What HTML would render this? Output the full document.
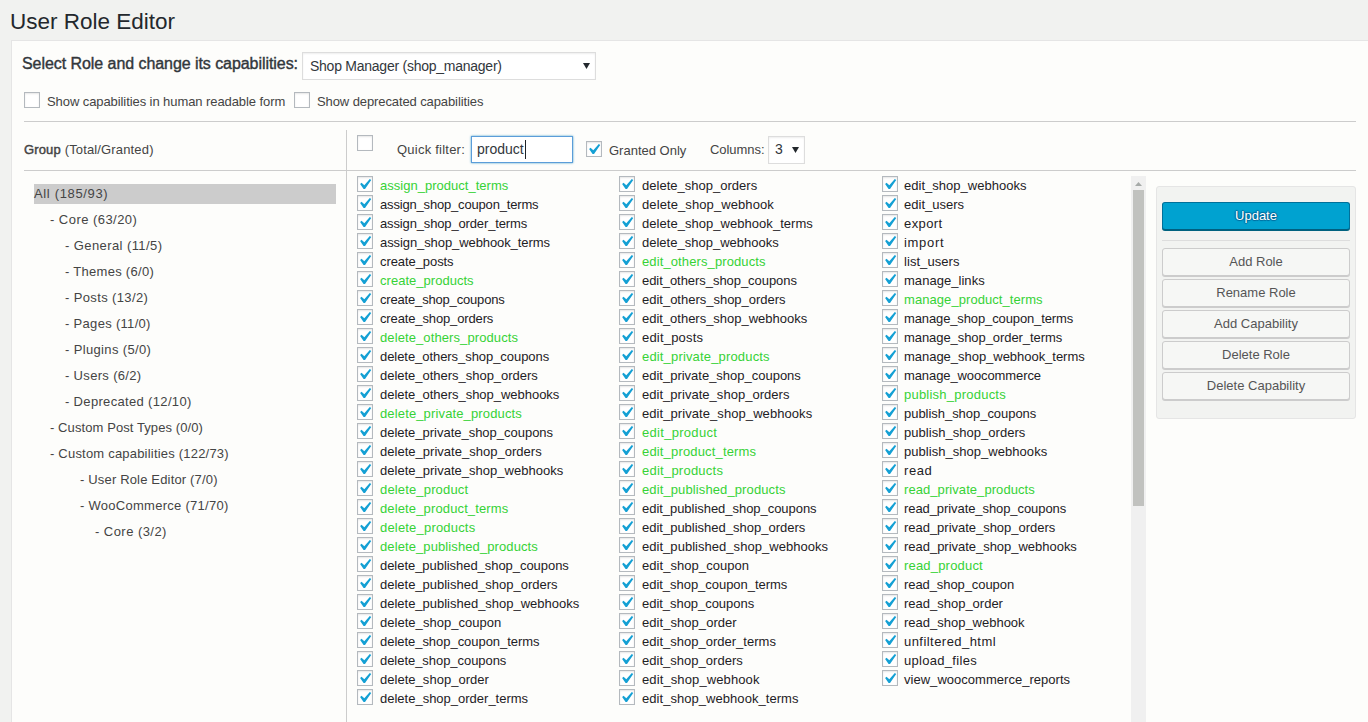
<!DOCTYPE html>
<html><head><meta charset="utf-8"><title>User Role Editor</title>
<style>
html,body{margin:0;padding:0}
body{width:1368px;height:722px;overflow:hidden;background:#f1f2f0;position:relative;font-family:"Liberation Sans", sans-serif}
.t{position:absolute;white-space:nowrap}
.cb{position:absolute;width:16px;height:16px;box-sizing:border-box;border:1px solid #b4b9be;background:#fff;box-shadow:inset 0 1px 2px rgba(0,0,0,.1)}
.cb svg{position:absolute;left:-1px;top:-1px}
.hl{position:absolute;height:1px;background:#cccccc}
.vl{position:absolute;width:1px;background:#cccccc}
.sel{position:absolute;box-sizing:border-box;border:1px solid #dddddd;background:#fff;box-shadow:inset 0 1px 2px rgba(0,0,0,.07)}
.inp{position:absolute;box-sizing:border-box;border:1px solid #5b9dd9;background:#fff;box-shadow:0 0 2px rgba(30,140,190,.8)}
.btnp{position:absolute;box-sizing:border-box;background:#00a2d0;border:1px solid #00709a;border-bottom-color:#005f80;box-shadow:0 1px 0 #00627f;border-radius:3px;color:#fff;font-size:13px;text-align:center;line-height:26px;text-shadow:0 -1px 1px #006799,1px 0 1px #006799,0 1px 1px #006799,-1px 0 1px #006799}
.btn{position:absolute;box-sizing:border-box;background:#f6f7f5;border:1px solid #cccccc;box-shadow:0 1px 0 #cccccc;border-radius:3px;color:#555;font-size:13px;text-align:center;line-height:26px}
</style></head>
<body>
<div class="t" style="left:10px;top:8.5px;font-size:22.5px;line-height:25px;color:#23282d;">User Role Editor</div>
<div style="position:absolute;left:11px;top:40px;width:1400px;height:800px;background:#fdfdfb;border:1px solid #e5e5e5;box-sizing:border-box"></div>
<div class="t" style="left:22px;top:54.599999999999994px;font-size:16px;line-height:17px;color:#32373c;letter-spacing:-0.06px;-webkit-text-stroke:0.4px #32373c;">Select Role and change its capabilities:</div>
<div class="sel" style="left:302px;top:52px;width:294px;height:28px"></div>
<div class="t" style="left:310px;top:58px;font-size:14px;line-height:16px;color:#32373c;letter-spacing:-0.25px;">Shop Manager (shop_manager)</div>
<svg style="position:absolute;left:583px;top:63px" width="7" height="6"><path d="M0 0 L7 0 L3.5 6 Z" fill="#23282d"/></svg>
<div class="cb" style="left:24px;top:92px"></div>
<div class="t" style="left:47px;top:93.5px;font-size:13px;line-height:15px;color:#444;letter-spacing:-0.08px;">Show capabilities in human readable form</div>
<div class="cb" style="left:294px;top:92px"></div>
<div class="t" style="left:317px;top:93.5px;font-size:13px;line-height:15px;color:#444;letter-spacing:-0.1px;">Show deprecated capabilities</div>
<div class="hl" style="left:24px;top:121px;width:1332px"></div>
<div class="hl" style="left:24px;top:170px;width:1332px"></div>
<div class="vl" style="left:346px;top:130px;height:600px"></div>
<div class="t" style="left:24px;top:142px;font-size:13px;line-height:15px;color:#444;letter-spacing:0.15px;"><span style="-webkit-text-stroke:0.45px #444">Group</span> (Total/Granted)</div>
<div class="cb" style="left:357px;top:135px"></div>
<div class="t" style="left:397px;top:142px;font-size:13px;line-height:15px;color:#444;letter-spacing:0.23px;">Quick filter:</div>
<div class="inp" style="left:471px;top:136px;width:102px;height:27px"></div>
<div class="t" style="left:477px;top:141px;font-size:14px;line-height:16px;color:#32373c;">product</div>
<div style="position:absolute;left:525px;top:140px;width:1px;height:19px;background:#1d2125"></div>
<div class="cb" style="left:586px;top:141px"><svg width="16" height="16" viewBox="0 0 16 16"><path transform="translate(-3.07,-2.25) scale(1.07)" d="M14.83 4.89l1.34.94-5.81 8.38H9.02L5.78 9.67l1.34-1.25 2.57 2.4z" fill="#14a0d4"/></svg></div>
<div class="t" style="left:609px;top:142.5px;font-size:13px;line-height:15px;color:#444;letter-spacing:0.0px;">Granted Only</div>
<div class="t" style="left:710px;top:141.5px;font-size:13px;line-height:15px;color:#444;letter-spacing:-0.05px;">Columns:</div>
<div class="sel" style="left:768px;top:136px;width:37px;height:28px"></div>
<div class="t" style="left:775px;top:141px;font-size:14px;line-height:16px;color:#32373c;">3</div>
<svg style="position:absolute;left:792px;top:147px" width="7" height="6"><path d="M0 0 L7 0 L3.5 6 Z" fill="#23282d"/></svg>
<div style="position:absolute;left:34px;top:184px;width:302px;height:20px;background:#cccccc"></div>
<div class="t" style="left:34px;top:186px;font-size:13px;line-height:15px;color:#444;letter-spacing:0.656px;">All (185/93)</div>
<div class="t" style="left:50px;top:212px;font-size:13px;line-height:15px;color:#444;letter-spacing:0.457px;">- Core (63/20)</div>
<div class="t" style="left:65px;top:238px;font-size:13px;line-height:15px;color:#444;letter-spacing:0.413px;">- General (11/5)</div>
<div class="t" style="left:65px;top:264px;font-size:13px;line-height:15px;color:#444;letter-spacing:0.288px;">- Themes (6/0)</div>
<div class="t" style="left:65px;top:290px;font-size:13px;line-height:15px;color:#444;letter-spacing:0.372px;">- Posts (13/2)</div>
<div class="t" style="left:65px;top:316px;font-size:13px;line-height:15px;color:#444;letter-spacing:0.311px;">- Pages (11/0)</div>
<div class="t" style="left:65px;top:342px;font-size:13px;line-height:15px;color:#444;letter-spacing:0.351px;">- Plugins (5/0)</div>
<div class="t" style="left:65px;top:368px;font-size:13px;line-height:15px;color:#444;letter-spacing:0.33px;">- Users (6/2)</div>
<div class="t" style="left:65px;top:394px;font-size:13px;line-height:15px;color:#444;letter-spacing:0.333px;">- Deprecated (12/10)</div>
<div class="t" style="left:50px;top:420px;font-size:13px;line-height:15px;color:#444;letter-spacing:0.088px;">- Custom Post Types (0/0)</div>
<div class="t" style="left:50px;top:446px;font-size:13px;line-height:15px;color:#444;letter-spacing:0.204px;">- Custom capabilities (122/73)</div>
<div class="t" style="left:80px;top:472px;font-size:13px;line-height:15px;color:#444;letter-spacing:0.167px;">- User Role Editor (7/0)</div>
<div class="t" style="left:80px;top:498px;font-size:13px;line-height:15px;color:#444;letter-spacing:0.275px;">- WooCommerce (71/70)</div>
<div class="t" style="left:95px;top:524px;font-size:13px;line-height:15px;color:#444;letter-spacing:0.453px;">- Core (3/2)</div>
<div class="cb" style="left:357px;top:176px"><svg width="16" height="16" viewBox="0 0 16 16"><path transform="translate(-3.07,-2.25) scale(1.07)" d="M14.83 4.89l1.34.94-5.81 8.38H9.02L5.78 9.67l1.34-1.25 2.57 2.4z" fill="#14a0d4"/></svg></div>
<div class="t" style="left:380px;top:178px;font-size:13px;line-height:15px;color:#36d236;letter-spacing:0.018px;">assign_product_terms</div>
<div class="cb" style="left:357px;top:195px"><svg width="16" height="16" viewBox="0 0 16 16"><path transform="translate(-3.07,-2.25) scale(1.07)" d="M14.83 4.89l1.34.94-5.81 8.38H9.02L5.78 9.67l1.34-1.25 2.57 2.4z" fill="#14a0d4"/></svg></div>
<div class="t" style="left:380px;top:197px;font-size:13px;line-height:15px;color:#1d2125;letter-spacing:-0.176px;">assign_shop_coupon_terms</div>
<div class="cb" style="left:357px;top:214px"><svg width="16" height="16" viewBox="0 0 16 16"><path transform="translate(-3.07,-2.25) scale(1.07)" d="M14.83 4.89l1.34.94-5.81 8.38H9.02L5.78 9.67l1.34-1.25 2.57 2.4z" fill="#14a0d4"/></svg></div>
<div class="t" style="left:380px;top:216px;font-size:13px;line-height:15px;color:#1d2125;letter-spacing:-0.143px;">assign_shop_order_terms</div>
<div class="cb" style="left:357px;top:233px"><svg width="16" height="16" viewBox="0 0 16 16"><path transform="translate(-3.07,-2.25) scale(1.07)" d="M14.83 4.89l1.34.94-5.81 8.38H9.02L5.78 9.67l1.34-1.25 2.57 2.4z" fill="#14a0d4"/></svg></div>
<div class="t" style="left:380px;top:235px;font-size:13px;line-height:15px;color:#1d2125;letter-spacing:-0.087px;">assign_shop_webhook_terms</div>
<div class="cb" style="left:357px;top:252px"><svg width="16" height="16" viewBox="0 0 16 16"><path transform="translate(-3.07,-2.25) scale(1.07)" d="M14.83 4.89l1.34.94-5.81 8.38H9.02L5.78 9.67l1.34-1.25 2.57 2.4z" fill="#14a0d4"/></svg></div>
<div class="t" style="left:380px;top:254px;font-size:13px;line-height:15px;color:#1d2125;letter-spacing:-0.075px;">create_posts</div>
<div class="cb" style="left:357px;top:271px"><svg width="16" height="16" viewBox="0 0 16 16"><path transform="translate(-3.07,-2.25) scale(1.07)" d="M14.83 4.89l1.34.94-5.81 8.38H9.02L5.78 9.67l1.34-1.25 2.57 2.4z" fill="#14a0d4"/></svg></div>
<div class="t" style="left:380px;top:273px;font-size:13px;line-height:15px;color:#36d236;letter-spacing:0.023px;">create_products</div>
<div class="cb" style="left:357px;top:290px"><svg width="16" height="16" viewBox="0 0 16 16"><path transform="translate(-3.07,-2.25) scale(1.07)" d="M14.83 4.89l1.34.94-5.81 8.38H9.02L5.78 9.67l1.34-1.25 2.57 2.4z" fill="#14a0d4"/></svg></div>
<div class="t" style="left:380px;top:292px;font-size:13px;line-height:15px;color:#1d2125;letter-spacing:-0.176px;">create_shop_coupons</div>
<div class="cb" style="left:357px;top:309px"><svg width="16" height="16" viewBox="0 0 16 16"><path transform="translate(-3.07,-2.25) scale(1.07)" d="M14.83 4.89l1.34.94-5.81 8.38H9.02L5.78 9.67l1.34-1.25 2.57 2.4z" fill="#14a0d4"/></svg></div>
<div class="t" style="left:380px;top:311px;font-size:13px;line-height:15px;color:#1d2125;letter-spacing:-0.133px;">create_shop_orders</div>
<div class="cb" style="left:357px;top:328px"><svg width="16" height="16" viewBox="0 0 16 16"><path transform="translate(-3.07,-2.25) scale(1.07)" d="M14.83 4.89l1.34.94-5.81 8.38H9.02L5.78 9.67l1.34-1.25 2.57 2.4z" fill="#14a0d4"/></svg></div>
<div class="t" style="left:380px;top:330px;font-size:13px;line-height:15px;color:#36d236;letter-spacing:0.1px;">delete_others_products</div>
<div class="cb" style="left:357px;top:347px"><svg width="16" height="16" viewBox="0 0 16 16"><path transform="translate(-3.07,-2.25) scale(1.07)" d="M14.83 4.89l1.34.94-5.81 8.38H9.02L5.78 9.67l1.34-1.25 2.57 2.4z" fill="#14a0d4"/></svg></div>
<div class="t" style="left:380px;top:349px;font-size:13px;line-height:15px;color:#1d2125;letter-spacing:-0.056px;">delete_others_shop_coupons</div>
<div class="cb" style="left:357px;top:366px"><svg width="16" height="16" viewBox="0 0 16 16"><path transform="translate(-3.07,-2.25) scale(1.07)" d="M14.83 4.89l1.34.94-5.81 8.38H9.02L5.78 9.67l1.34-1.25 2.57 2.4z" fill="#14a0d4"/></svg></div>
<div class="t" style="left:380px;top:368px;font-size:13px;line-height:15px;color:#1d2125;letter-spacing:-0.019px;">delete_others_shop_orders</div>
<div class="cb" style="left:357px;top:385px"><svg width="16" height="16" viewBox="0 0 16 16"><path transform="translate(-3.07,-2.25) scale(1.07)" d="M14.83 4.89l1.34.94-5.81 8.38H9.02L5.78 9.67l1.34-1.25 2.57 2.4z" fill="#14a0d4"/></svg></div>
<div class="t" style="left:380px;top:387px;font-size:13px;line-height:15px;color:#1d2125;letter-spacing:-0.024px;">delete_others_shop_webhooks</div>
<div class="cb" style="left:357px;top:404px"><svg width="16" height="16" viewBox="0 0 16 16"><path transform="translate(-3.07,-2.25) scale(1.07)" d="M14.83 4.89l1.34.94-5.81 8.38H9.02L5.78 9.67l1.34-1.25 2.57 2.4z" fill="#14a0d4"/></svg></div>
<div class="t" style="left:380px;top:406px;font-size:13px;line-height:15px;color:#36d236;letter-spacing:0.139px;">delete_private_products</div>
<div class="cb" style="left:357px;top:423px"><svg width="16" height="16" viewBox="0 0 16 16"><path transform="translate(-3.07,-2.25) scale(1.07)" d="M14.83 4.89l1.34.94-5.81 8.38H9.02L5.78 9.67l1.34-1.25 2.57 2.4z" fill="#14a0d4"/></svg></div>
<div class="t" style="left:380px;top:425px;font-size:13px;line-height:15px;color:#1d2125;letter-spacing:-0.016px;">delete_private_shop_coupons</div>
<div class="cb" style="left:357px;top:442px"><svg width="16" height="16" viewBox="0 0 16 16"><path transform="translate(-3.07,-2.25) scale(1.07)" d="M14.83 4.89l1.34.94-5.81 8.38H9.02L5.78 9.67l1.34-1.25 2.57 2.4z" fill="#14a0d4"/></svg></div>
<div class="t" style="left:380px;top:444px;font-size:13px;line-height:15px;color:#1d2125;letter-spacing:0.02px;">delete_private_shop_orders</div>
<div class="cb" style="left:357px;top:461px"><svg width="16" height="16" viewBox="0 0 16 16"><path transform="translate(-3.07,-2.25) scale(1.07)" d="M14.83 4.89l1.34.94-5.81 8.38H9.02L5.78 9.67l1.34-1.25 2.57 2.4z" fill="#14a0d4"/></svg></div>
<div class="t" style="left:380px;top:463px;font-size:13px;line-height:15px;color:#1d2125;letter-spacing:0.013px;">delete_private_shop_webhooks</div>
<div class="cb" style="left:357px;top:480px"><svg width="16" height="16" viewBox="0 0 16 16"><path transform="translate(-3.07,-2.25) scale(1.07)" d="M14.83 4.89l1.34.94-5.81 8.38H9.02L5.78 9.67l1.34-1.25 2.57 2.4z" fill="#14a0d4"/></svg></div>
<div class="t" style="left:380px;top:482px;font-size:13px;line-height:15px;color:#36d236;letter-spacing:0.156px;">delete_product</div>
<div class="cb" style="left:357px;top:499px"><svg width="16" height="16" viewBox="0 0 16 16"><path transform="translate(-3.07,-2.25) scale(1.07)" d="M14.83 4.89l1.34.94-5.81 8.38H9.02L5.78 9.67l1.34-1.25 2.57 2.4z" fill="#14a0d4"/></svg></div>
<div class="t" style="left:380px;top:501px;font-size:13px;line-height:15px;color:#36d236;letter-spacing:0.133px;">delete_product_terms</div>
<div class="cb" style="left:357px;top:518px"><svg width="16" height="16" viewBox="0 0 16 16"><path transform="translate(-3.07,-2.25) scale(1.07)" d="M14.83 4.89l1.34.94-5.81 8.38H9.02L5.78 9.67l1.34-1.25 2.57 2.4z" fill="#14a0d4"/></svg></div>
<div class="t" style="left:380px;top:520px;font-size:13px;line-height:15px;color:#36d236;letter-spacing:0.187px;">delete_products</div>
<div class="cb" style="left:357px;top:537px"><svg width="16" height="16" viewBox="0 0 16 16"><path transform="translate(-3.07,-2.25) scale(1.07)" d="M14.83 4.89l1.34.94-5.81 8.38H9.02L5.78 9.67l1.34-1.25 2.57 2.4z" fill="#14a0d4"/></svg></div>
<div class="t" style="left:380px;top:539px;font-size:13px;line-height:15px;color:#36d236;letter-spacing:0.101px;">delete_published_products</div>
<div class="cb" style="left:357px;top:556px"><svg width="16" height="16" viewBox="0 0 16 16"><path transform="translate(-3.07,-2.25) scale(1.07)" d="M14.83 4.89l1.34.94-5.81 8.38H9.02L5.78 9.67l1.34-1.25 2.57 2.4z" fill="#14a0d4"/></svg></div>
<div class="t" style="left:380px;top:558px;font-size:13px;line-height:15px;color:#1d2125;letter-spacing:-0.045px;">delete_published_shop_coupons</div>
<div class="cb" style="left:357px;top:575px"><svg width="16" height="16" viewBox="0 0 16 16"><path transform="translate(-3.07,-2.25) scale(1.07)" d="M14.83 4.89l1.34.94-5.81 8.38H9.02L5.78 9.67l1.34-1.25 2.57 2.4z" fill="#14a0d4"/></svg></div>
<div class="t" style="left:380px;top:577px;font-size:13px;line-height:15px;color:#1d2125;letter-spacing:-0.013px;">delete_published_shop_orders</div>
<div class="cb" style="left:357px;top:594px"><svg width="16" height="16" viewBox="0 0 16 16"><path transform="translate(-3.07,-2.25) scale(1.07)" d="M14.83 4.89l1.34.94-5.81 8.38H9.02L5.78 9.67l1.34-1.25 2.57 2.4z" fill="#14a0d4"/></svg></div>
<div class="t" style="left:380px;top:596px;font-size:13px;line-height:15px;color:#1d2125;letter-spacing:-0.01px;">delete_published_shop_webhooks</div>
<div class="cb" style="left:357px;top:613px"><svg width="16" height="16" viewBox="0 0 16 16"><path transform="translate(-3.07,-2.25) scale(1.07)" d="M14.83 4.89l1.34.94-5.81 8.38H9.02L5.78 9.67l1.34-1.25 2.57 2.4z" fill="#14a0d4"/></svg></div>
<div class="t" style="left:380px;top:615px;font-size:13px;line-height:15px;color:#1d2125;letter-spacing:0.033px;">delete_shop_coupon</div>
<div class="cb" style="left:357px;top:632px"><svg width="16" height="16" viewBox="0 0 16 16"><path transform="translate(-3.07,-2.25) scale(1.07)" d="M14.83 4.89l1.34.94-5.81 8.38H9.02L5.78 9.67l1.34-1.25 2.57 2.4z" fill="#14a0d4"/></svg></div>
<div class="t" style="left:380px;top:634px;font-size:13px;line-height:15px;color:#1d2125;letter-spacing:-0.037px;">delete_shop_coupon_terms</div>
<div class="cb" style="left:357px;top:651px"><svg width="16" height="16" viewBox="0 0 16 16"><path transform="translate(-3.07,-2.25) scale(1.07)" d="M14.83 4.89l1.34.94-5.81 8.38H9.02L5.78 9.67l1.34-1.25 2.57 2.4z" fill="#14a0d4"/></svg></div>
<div class="t" style="left:380px;top:653px;font-size:13px;line-height:15px;color:#1d2125;letter-spacing:-0.047px;">delete_shop_coupons</div>
<div class="cb" style="left:357px;top:670px"><svg width="16" height="16" viewBox="0 0 16 16"><path transform="translate(-3.07,-2.25) scale(1.07)" d="M14.83 4.89l1.34.94-5.81 8.38H9.02L5.78 9.67l1.34-1.25 2.57 2.4z" fill="#14a0d4"/></svg></div>
<div class="t" style="left:380px;top:672px;font-size:13px;line-height:15px;color:#1d2125;letter-spacing:0.031px;">delete_shop_order</div>
<div class="cb" style="left:357px;top:689px"><svg width="16" height="16" viewBox="0 0 16 16"><path transform="translate(-3.07,-2.25) scale(1.07)" d="M14.83 4.89l1.34.94-5.81 8.38H9.02L5.78 9.67l1.34-1.25 2.57 2.4z" fill="#14a0d4"/></svg></div>
<div class="t" style="left:380px;top:691px;font-size:13px;line-height:15px;color:#1d2125;letter-spacing:-0.002px;">delete_shop_order_terms</div>
<div class="cb" style="left:619px;top:176px"><svg width="16" height="16" viewBox="0 0 16 16"><path transform="translate(-3.07,-2.25) scale(1.07)" d="M14.83 4.89l1.34.94-5.81 8.38H9.02L5.78 9.67l1.34-1.25 2.57 2.4z" fill="#14a0d4"/></svg></div>
<div class="t" style="left:642px;top:178px;font-size:13px;line-height:15px;color:#1d2125;letter-spacing:0.016px;">delete_shop_orders</div>
<div class="cb" style="left:619px;top:195px"><svg width="16" height="16" viewBox="0 0 16 16"><path transform="translate(-3.07,-2.25) scale(1.07)" d="M14.83 4.89l1.34.94-5.81 8.38H9.02L5.78 9.67l1.34-1.25 2.57 2.4z" fill="#14a0d4"/></svg></div>
<div class="t" style="left:642px;top:197px;font-size:13px;line-height:15px;color:#1d2125;letter-spacing:0.097px;">delete_shop_webhook</div>
<div class="cb" style="left:619px;top:214px"><svg width="16" height="16" viewBox="0 0 16 16"><path transform="translate(-3.07,-2.25) scale(1.07)" d="M14.83 4.89l1.34.94-5.81 8.38H9.02L5.78 9.67l1.34-1.25 2.57 2.4z" fill="#14a0d4"/></svg></div>
<div class="t" style="left:642px;top:216px;font-size:13px;line-height:15px;color:#1d2125;letter-spacing:0.041px;">delete_shop_webhook_terms</div>
<div class="cb" style="left:619px;top:233px"><svg width="16" height="16" viewBox="0 0 16 16"><path transform="translate(-3.07,-2.25) scale(1.07)" d="M14.83 4.89l1.34.94-5.81 8.38H9.02L5.78 9.67l1.34-1.25 2.57 2.4z" fill="#14a0d4"/></svg></div>
<div class="t" style="left:642px;top:235px;font-size:13px;line-height:15px;color:#1d2125;letter-spacing:0.005px;">delete_shop_webhooks</div>
<div class="cb" style="left:619px;top:252px"><svg width="16" height="16" viewBox="0 0 16 16"><path transform="translate(-3.07,-2.25) scale(1.07)" d="M14.83 4.89l1.34.94-5.81 8.38H9.02L5.78 9.67l1.34-1.25 2.57 2.4z" fill="#14a0d4"/></svg></div>
<div class="t" style="left:642px;top:254px;font-size:13px;line-height:15px;color:#36d236;letter-spacing:0.111px;">edit_others_products</div>
<div class="cb" style="left:619px;top:271px"><svg width="16" height="16" viewBox="0 0 16 16"><path transform="translate(-3.07,-2.25) scale(1.07)" d="M14.83 4.89l1.34.94-5.81 8.38H9.02L5.78 9.67l1.34-1.25 2.57 2.4z" fill="#14a0d4"/></svg></div>
<div class="t" style="left:642px;top:273px;font-size:13px;line-height:15px;color:#1d2125;letter-spacing:-0.05px;">edit_others_shop_coupons</div>
<div class="cb" style="left:619px;top:290px"><svg width="16" height="16" viewBox="0 0 16 16"><path transform="translate(-3.07,-2.25) scale(1.07)" d="M14.83 4.89l1.34.94-5.81 8.38H9.02L5.78 9.67l1.34-1.25 2.57 2.4z" fill="#14a0d4"/></svg></div>
<div class="t" style="left:642px;top:292px;font-size:13px;line-height:15px;color:#1d2125;letter-spacing:-0.011px;">edit_others_shop_orders</div>
<div class="cb" style="left:619px;top:309px"><svg width="16" height="16" viewBox="0 0 16 16"><path transform="translate(-3.07,-2.25) scale(1.07)" d="M14.83 4.89l1.34.94-5.81 8.38H9.02L5.78 9.67l1.34-1.25 2.57 2.4z" fill="#14a0d4"/></svg></div>
<div class="t" style="left:642px;top:311px;font-size:13px;line-height:15px;color:#1d2125;letter-spacing:-0.016px;">edit_others_shop_webhooks</div>
<div class="cb" style="left:619px;top:328px"><svg width="16" height="16" viewBox="0 0 16 16"><path transform="translate(-3.07,-2.25) scale(1.07)" d="M14.83 4.89l1.34.94-5.81 8.38H9.02L5.78 9.67l1.34-1.25 2.57 2.4z" fill="#14a0d4"/></svg></div>
<div class="t" style="left:642px;top:330px;font-size:13px;line-height:15px;color:#1d2125;letter-spacing:0.192px;">edit_posts</div>
<div class="cb" style="left:619px;top:347px"><svg width="16" height="16" viewBox="0 0 16 16"><path transform="translate(-3.07,-2.25) scale(1.07)" d="M14.83 4.89l1.34.94-5.81 8.38H9.02L5.78 9.67l1.34-1.25 2.57 2.4z" fill="#14a0d4"/></svg></div>
<div class="t" style="left:642px;top:349px;font-size:13px;line-height:15px;color:#36d236;letter-spacing:0.165px;">edit_private_products</div>
<div class="cb" style="left:619px;top:366px"><svg width="16" height="16" viewBox="0 0 16 16"><path transform="translate(-3.07,-2.25) scale(1.07)" d="M14.83 4.89l1.34.94-5.81 8.38H9.02L5.78 9.67l1.34-1.25 2.57 2.4z" fill="#14a0d4"/></svg></div>
<div class="t" style="left:642px;top:368px;font-size:13px;line-height:15px;color:#1d2125;letter-spacing:-0.007px;">edit_private_shop_coupons</div>
<div class="cb" style="left:619px;top:385px"><svg width="16" height="16" viewBox="0 0 16 16"><path transform="translate(-3.07,-2.25) scale(1.07)" d="M14.83 4.89l1.34.94-5.81 8.38H9.02L5.78 9.67l1.34-1.25 2.57 2.4z" fill="#14a0d4"/></svg></div>
<div class="t" style="left:642px;top:387px;font-size:13px;line-height:15px;color:#1d2125;letter-spacing:0.032px;">edit_private_shop_orders</div>
<div class="cb" style="left:619px;top:404px"><svg width="16" height="16" viewBox="0 0 16 16"><path transform="translate(-3.07,-2.25) scale(1.07)" d="M14.83 4.89l1.34.94-5.81 8.38H9.02L5.78 9.67l1.34-1.25 2.57 2.4z" fill="#14a0d4"/></svg></div>
<div class="t" style="left:642px;top:406px;font-size:13px;line-height:15px;color:#1d2125;letter-spacing:0.072px;">edit_private_shop_webhooks</div>
<div class="cb" style="left:619px;top:423px"><svg width="16" height="16" viewBox="0 0 16 16"><path transform="translate(-3.07,-2.25) scale(1.07)" d="M14.83 4.89l1.34.94-5.81 8.38H9.02L5.78 9.67l1.34-1.25 2.57 2.4z" fill="#14a0d4"/></svg></div>
<div class="t" style="left:642px;top:425px;font-size:13px;line-height:15px;color:#36d236;letter-spacing:0.298px;">edit_product</div>
<div class="cb" style="left:619px;top:442px"><svg width="16" height="16" viewBox="0 0 16 16"><path transform="translate(-3.07,-2.25) scale(1.07)" d="M14.83 4.89l1.34.94-5.81 8.38H9.02L5.78 9.67l1.34-1.25 2.57 2.4z" fill="#14a0d4"/></svg></div>
<div class="t" style="left:642px;top:444px;font-size:13px;line-height:15px;color:#36d236;letter-spacing:0.162px;">edit_product_terms</div>
<div class="cb" style="left:619px;top:461px"><svg width="16" height="16" viewBox="0 0 16 16"><path transform="translate(-3.07,-2.25) scale(1.07)" d="M14.83 4.89l1.34.94-5.81 8.38H9.02L5.78 9.67l1.34-1.25 2.57 2.4z" fill="#14a0d4"/></svg></div>
<div class="t" style="left:642px;top:463px;font-size:13px;line-height:15px;color:#36d236;letter-spacing:0.238px;">edit_products</div>
<div class="cb" style="left:619px;top:480px"><svg width="16" height="16" viewBox="0 0 16 16"><path transform="translate(-3.07,-2.25) scale(1.07)" d="M14.83 4.89l1.34.94-5.81 8.38H9.02L5.78 9.67l1.34-1.25 2.57 2.4z" fill="#14a0d4"/></svg></div>
<div class="t" style="left:642px;top:482px;font-size:13px;line-height:15px;color:#36d236;letter-spacing:0.112px;">edit_published_products</div>
<div class="cb" style="left:619px;top:499px"><svg width="16" height="16" viewBox="0 0 16 16"><path transform="translate(-3.07,-2.25) scale(1.07)" d="M14.83 4.89l1.34.94-5.81 8.38H9.02L5.78 9.67l1.34-1.25 2.57 2.4z" fill="#14a0d4"/></svg></div>
<div class="t" style="left:642px;top:501px;font-size:13px;line-height:15px;color:#1d2125;letter-spacing:-0.04px;">edit_published_shop_coupons</div>
<div class="cb" style="left:619px;top:518px"><svg width="16" height="16" viewBox="0 0 16 16"><path transform="translate(-3.07,-2.25) scale(1.07)" d="M14.83 4.89l1.34.94-5.81 8.38H9.02L5.78 9.67l1.34-1.25 2.57 2.4z" fill="#14a0d4"/></svg></div>
<div class="t" style="left:642px;top:520px;font-size:13px;line-height:15px;color:#1d2125;letter-spacing:-0.004px;">edit_published_shop_orders</div>
<div class="cb" style="left:619px;top:537px"><svg width="16" height="16" viewBox="0 0 16 16"><path transform="translate(-3.07,-2.25) scale(1.07)" d="M14.83 4.89l1.34.94-5.81 8.38H9.02L5.78 9.67l1.34-1.25 2.57 2.4z" fill="#14a0d4"/></svg></div>
<div class="t" style="left:642px;top:539px;font-size:13px;line-height:15px;color:#1d2125;letter-spacing:0.036px;">edit_published_shop_webhooks</div>
<div class="cb" style="left:619px;top:556px"><svg width="16" height="16" viewBox="0 0 16 16"><path transform="translate(-3.07,-2.25) scale(1.07)" d="M14.83 4.89l1.34.94-5.81 8.38H9.02L5.78 9.67l1.34-1.25 2.57 2.4z" fill="#14a0d4"/></svg></div>
<div class="t" style="left:642px;top:558px;font-size:13px;line-height:15px;color:#1d2125;letter-spacing:0.053px;">edit_shop_coupon</div>
<div class="cb" style="left:619px;top:575px"><svg width="16" height="16" viewBox="0 0 16 16"><path transform="translate(-3.07,-2.25) scale(1.07)" d="M14.83 4.89l1.34.94-5.81 8.38H9.02L5.78 9.67l1.34-1.25 2.57 2.4z" fill="#14a0d4"/></svg></div>
<div class="t" style="left:642px;top:577px;font-size:13px;line-height:15px;color:#1d2125;letter-spacing:-0.034px;">edit_shop_coupon_terms</div>
<div class="cb" style="left:619px;top:594px"><svg width="16" height="16" viewBox="0 0 16 16"><path transform="translate(-3.07,-2.25) scale(1.07)" d="M14.83 4.89l1.34.94-5.81 8.38H9.02L5.78 9.67l1.34-1.25 2.57 2.4z" fill="#14a0d4"/></svg></div>
<div class="t" style="left:642px;top:596px;font-size:13px;line-height:15px;color:#1d2125;letter-spacing:-0.039px;">edit_shop_coupons</div>
<div class="cb" style="left:619px;top:613px"><svg width="16" height="16" viewBox="0 0 16 16"><path transform="translate(-3.07,-2.25) scale(1.07)" d="M14.83 4.89l1.34.94-5.81 8.38H9.02L5.78 9.67l1.34-1.25 2.57 2.4z" fill="#14a0d4"/></svg></div>
<div class="t" style="left:642px;top:615px;font-size:13px;line-height:15px;color:#1d2125;letter-spacing:0.052px;">edit_shop_order</div>
<div class="cb" style="left:619px;top:632px"><svg width="16" height="16" viewBox="0 0 16 16"><path transform="translate(-3.07,-2.25) scale(1.07)" d="M14.83 4.89l1.34.94-5.81 8.38H9.02L5.78 9.67l1.34-1.25 2.57 2.4z" fill="#14a0d4"/></svg></div>
<div class="t" style="left:642px;top:634px;font-size:13px;line-height:15px;color:#1d2125;letter-spacing:0.01px;">edit_shop_order_terms</div>
<div class="cb" style="left:619px;top:651px"><svg width="16" height="16" viewBox="0 0 16 16"><path transform="translate(-3.07,-2.25) scale(1.07)" d="M14.83 4.89l1.34.94-5.81 8.38H9.02L5.78 9.67l1.34-1.25 2.57 2.4z" fill="#14a0d4"/></svg></div>
<div class="t" style="left:642px;top:653px;font-size:13px;line-height:15px;color:#1d2125;letter-spacing:0.02px;">edit_shop_orders</div>
<div class="cb" style="left:619px;top:670px"><svg width="16" height="16" viewBox="0 0 16 16"><path transform="translate(-3.07,-2.25) scale(1.07)" d="M14.83 4.89l1.34.94-5.81 8.38H9.02L5.78 9.67l1.34-1.25 2.57 2.4z" fill="#14a0d4"/></svg></div>
<div class="t" style="left:642px;top:672px;font-size:13px;line-height:15px;color:#1d2125;letter-spacing:0.111px;">edit_shop_webhook</div>
<div class="cb" style="left:619px;top:689px"><svg width="16" height="16" viewBox="0 0 16 16"><path transform="translate(-3.07,-2.25) scale(1.07)" d="M14.83 4.89l1.34.94-5.81 8.38H9.02L5.78 9.67l1.34-1.25 2.57 2.4z" fill="#14a0d4"/></svg></div>
<div class="t" style="left:642px;top:691px;font-size:13px;line-height:15px;color:#1d2125;letter-spacing:0.048px;">edit_shop_webhook_terms</div>
<div class="cb" style="left:882px;top:176px"><svg width="16" height="16" viewBox="0 0 16 16"><path transform="translate(-3.07,-2.25) scale(1.07)" d="M14.83 4.89l1.34.94-5.81 8.38H9.02L5.78 9.67l1.34-1.25 2.57 2.4z" fill="#14a0d4"/></svg></div>
<div class="t" style="left:904px;top:178px;font-size:13px;line-height:15px;color:#1d2125;letter-spacing:0.021px;">edit_shop_webhooks</div>
<div class="cb" style="left:882px;top:195px"><svg width="16" height="16" viewBox="0 0 16 16"><path transform="translate(-3.07,-2.25) scale(1.07)" d="M14.83 4.89l1.34.94-5.81 8.38H9.02L5.78 9.67l1.34-1.25 2.57 2.4z" fill="#14a0d4"/></svg></div>
<div class="t" style="left:904px;top:197px;font-size:13px;line-height:15px;color:#1d2125;letter-spacing:0.013px;">edit_users</div>
<div class="cb" style="left:882px;top:214px"><svg width="16" height="16" viewBox="0 0 16 16"><path transform="translate(-3.07,-2.25) scale(1.07)" d="M14.83 4.89l1.34.94-5.81 8.38H9.02L5.78 9.67l1.34-1.25 2.57 2.4z" fill="#14a0d4"/></svg></div>
<div class="t" style="left:904px;top:216px;font-size:13px;line-height:15px;color:#1d2125;letter-spacing:0.4px;">export</div>
<div class="cb" style="left:882px;top:233px"><svg width="16" height="16" viewBox="0 0 16 16"><path transform="translate(-3.07,-2.25) scale(1.07)" d="M14.83 4.89l1.34.94-5.81 8.38H9.02L5.78 9.67l1.34-1.25 2.57 2.4z" fill="#14a0d4"/></svg></div>
<div class="t" style="left:904px;top:235px;font-size:13px;line-height:15px;color:#1d2125;letter-spacing:0.68px;">import</div>
<div class="cb" style="left:882px;top:252px"><svg width="16" height="16" viewBox="0 0 16 16"><path transform="translate(-3.07,-2.25) scale(1.07)" d="M14.83 4.89l1.34.94-5.81 8.38H9.02L5.78 9.67l1.34-1.25 2.57 2.4z" fill="#14a0d4"/></svg></div>
<div class="t" style="left:904px;top:254px;font-size:13px;line-height:15px;color:#1d2125;letter-spacing:0.057px;">list_users</div>
<div class="cb" style="left:882px;top:271px"><svg width="16" height="16" viewBox="0 0 16 16"><path transform="translate(-3.07,-2.25) scale(1.07)" d="M14.83 4.89l1.34.94-5.81 8.38H9.02L5.78 9.67l1.34-1.25 2.57 2.4z" fill="#14a0d4"/></svg></div>
<div class="t" style="left:904px;top:273px;font-size:13px;line-height:15px;color:#1d2125;letter-spacing:0.043px;">manage_links</div>
<div class="cb" style="left:882px;top:290px"><svg width="16" height="16" viewBox="0 0 16 16"><path transform="translate(-3.07,-2.25) scale(1.07)" d="M14.83 4.89l1.34.94-5.81 8.38H9.02L5.78 9.67l1.34-1.25 2.57 2.4z" fill="#14a0d4"/></svg></div>
<div class="t" style="left:904px;top:292px;font-size:13px;line-height:15px;color:#36d236;letter-spacing:0.069px;">manage_product_terms</div>
<div class="cb" style="left:882px;top:309px"><svg width="16" height="16" viewBox="0 0 16 16"><path transform="translate(-3.07,-2.25) scale(1.07)" d="M14.83 4.89l1.34.94-5.81 8.38H9.02L5.78 9.67l1.34-1.25 2.57 2.4z" fill="#14a0d4"/></svg></div>
<div class="t" style="left:904px;top:311px;font-size:13px;line-height:15px;color:#1d2125;letter-spacing:-0.12px;">manage_shop_coupon_terms</div>
<div class="cb" style="left:882px;top:328px"><svg width="16" height="16" viewBox="0 0 16 16"><path transform="translate(-3.07,-2.25) scale(1.07)" d="M14.83 4.89l1.34.94-5.81 8.38H9.02L5.78 9.67l1.34-1.25 2.57 2.4z" fill="#14a0d4"/></svg></div>
<div class="t" style="left:904px;top:330px;font-size:13px;line-height:15px;color:#1d2125;letter-spacing:-0.065px;">manage_shop_order_terms</div>
<div class="cb" style="left:882px;top:347px"><svg width="16" height="16" viewBox="0 0 16 16"><path transform="translate(-3.07,-2.25) scale(1.07)" d="M14.83 4.89l1.34.94-5.81 8.38H9.02L5.78 9.67l1.34-1.25 2.57 2.4z" fill="#14a0d4"/></svg></div>
<div class="t" style="left:904px;top:349px;font-size:13px;line-height:15px;color:#1d2125;letter-spacing:-0.029px;">manage_shop_webhook_terms</div>
<div class="cb" style="left:882px;top:366px"><svg width="16" height="16" viewBox="0 0 16 16"><path transform="translate(-3.07,-2.25) scale(1.07)" d="M14.83 4.89l1.34.94-5.81 8.38H9.02L5.78 9.67l1.34-1.25 2.57 2.4z" fill="#14a0d4"/></svg></div>
<div class="t" style="left:904px;top:368px;font-size:13px;line-height:15px;color:#1d2125;letter-spacing:-0.097px;">manage_woocommerce</div>
<div class="cb" style="left:882px;top:385px"><svg width="16" height="16" viewBox="0 0 16 16"><path transform="translate(-3.07,-2.25) scale(1.07)" d="M14.83 4.89l1.34.94-5.81 8.38H9.02L5.78 9.67l1.34-1.25 2.57 2.4z" fill="#14a0d4"/></svg></div>
<div class="t" style="left:904px;top:387px;font-size:13px;line-height:15px;color:#36d236;letter-spacing:0.227px;">publish_products</div>
<div class="cb" style="left:882px;top:404px"><svg width="16" height="16" viewBox="0 0 16 16"><path transform="translate(-3.07,-2.25) scale(1.07)" d="M14.83 4.89l1.34.94-5.81 8.38H9.02L5.78 9.67l1.34-1.25 2.57 2.4z" fill="#14a0d4"/></svg></div>
<div class="t" style="left:904px;top:406px;font-size:13px;line-height:15px;color:#1d2125;letter-spacing:-0.036px;">publish_shop_coupons</div>
<div class="cb" style="left:882px;top:423px"><svg width="16" height="16" viewBox="0 0 16 16"><path transform="translate(-3.07,-2.25) scale(1.07)" d="M14.83 4.89l1.34.94-5.81 8.38H9.02L5.78 9.67l1.34-1.25 2.57 2.4z" fill="#14a0d4"/></svg></div>
<div class="t" style="left:904px;top:425px;font-size:13px;line-height:15px;color:#1d2125;letter-spacing:0.035px;">publish_shop_orders</div>
<div class="cb" style="left:882px;top:442px"><svg width="16" height="16" viewBox="0 0 16 16"><path transform="translate(-3.07,-2.25) scale(1.07)" d="M14.83 4.89l1.34.94-5.81 8.38H9.02L5.78 9.67l1.34-1.25 2.57 2.4z" fill="#14a0d4"/></svg></div>
<div class="t" style="left:904px;top:444px;font-size:13px;line-height:15px;color:#1d2125;letter-spacing:0.04px;">publish_shop_webhooks</div>
<div class="cb" style="left:882px;top:461px"><svg width="16" height="16" viewBox="0 0 16 16"><path transform="translate(-3.07,-2.25) scale(1.07)" d="M14.83 4.89l1.34.94-5.81 8.38H9.02L5.78 9.67l1.34-1.25 2.57 2.4z" fill="#14a0d4"/></svg></div>
<div class="t" style="left:904px;top:463px;font-size:13px;line-height:15px;color:#1d2125;letter-spacing:0.547px;">read</div>
<div class="cb" style="left:882px;top:480px"><svg width="16" height="16" viewBox="0 0 16 16"><path transform="translate(-3.07,-2.25) scale(1.07)" d="M14.83 4.89l1.34.94-5.81 8.38H9.02L5.78 9.67l1.34-1.25 2.57 2.4z" fill="#14a0d4"/></svg></div>
<div class="t" style="left:904px;top:482px;font-size:13px;line-height:15px;color:#36d236;letter-spacing:0.07px;">read_private_products</div>
<div class="cb" style="left:882px;top:499px"><svg width="16" height="16" viewBox="0 0 16 16"><path transform="translate(-3.07,-2.25) scale(1.07)" d="M14.83 4.89l1.34.94-5.81 8.38H9.02L5.78 9.67l1.34-1.25 2.57 2.4z" fill="#14a0d4"/></svg></div>
<div class="t" style="left:904px;top:501px;font-size:13px;line-height:15px;color:#1d2125;letter-spacing:-0.078px;">read_private_shop_coupons</div>
<div class="cb" style="left:882px;top:518px"><svg width="16" height="16" viewBox="0 0 16 16"><path transform="translate(-3.07,-2.25) scale(1.07)" d="M14.83 4.89l1.34.94-5.81 8.38H9.02L5.78 9.67l1.34-1.25 2.57 2.4z" fill="#14a0d4"/></svg></div>
<div class="t" style="left:904px;top:520px;font-size:13px;line-height:15px;color:#1d2125;letter-spacing:-0.025px;">read_private_shop_orders</div>
<div class="cb" style="left:882px;top:537px"><svg width="16" height="16" viewBox="0 0 16 16"><path transform="translate(-3.07,-2.25) scale(1.07)" d="M14.83 4.89l1.34.94-5.81 8.38H9.02L5.78 9.67l1.34-1.25 2.57 2.4z" fill="#14a0d4"/></svg></div>
<div class="t" style="left:904px;top:539px;font-size:13px;line-height:15px;color:#1d2125;letter-spacing:-0.024px;">read_private_shop_webhooks</div>
<div class="cb" style="left:882px;top:556px"><svg width="16" height="16" viewBox="0 0 16 16"><path transform="translate(-3.07,-2.25) scale(1.07)" d="M14.83 4.89l1.34.94-5.81 8.38H9.02L5.78 9.67l1.34-1.25 2.57 2.4z" fill="#14a0d4"/></svg></div>
<div class="t" style="left:904px;top:558px;font-size:13px;line-height:15px;color:#36d236;letter-spacing:0.189px;">read_product</div>
<div class="cb" style="left:882px;top:575px"><svg width="16" height="16" viewBox="0 0 16 16"><path transform="translate(-3.07,-2.25) scale(1.07)" d="M14.83 4.89l1.34.94-5.81 8.38H9.02L5.78 9.67l1.34-1.25 2.57 2.4z" fill="#14a0d4"/></svg></div>
<div class="t" style="left:904px;top:577px;font-size:13px;line-height:15px;color:#1d2125;letter-spacing:-0.08px;">read_shop_coupon</div>
<div class="cb" style="left:882px;top:594px"><svg width="16" height="16" viewBox="0 0 16 16"><path transform="translate(-3.07,-2.25) scale(1.07)" d="M14.83 4.89l1.34.94-5.81 8.38H9.02L5.78 9.67l1.34-1.25 2.57 2.4z" fill="#14a0d4"/></svg></div>
<div class="t" style="left:904px;top:596px;font-size:13px;line-height:15px;color:#1d2125;letter-spacing:-0.005px;">read_shop_order</div>
<div class="cb" style="left:882px;top:613px"><svg width="16" height="16" viewBox="0 0 16 16"><path transform="translate(-3.07,-2.25) scale(1.07)" d="M14.83 4.89l1.34.94-5.81 8.38H9.02L5.78 9.67l1.34-1.25 2.57 2.4z" fill="#14a0d4"/></svg></div>
<div class="t" style="left:904px;top:615px;font-size:13px;line-height:15px;color:#1d2125;letter-spacing:-0.007px;">read_shop_webhook</div>
<div class="cb" style="left:882px;top:632px"><svg width="16" height="16" viewBox="0 0 16 16"><path transform="translate(-3.07,-2.25) scale(1.07)" d="M14.83 4.89l1.34.94-5.81 8.38H9.02L5.78 9.67l1.34-1.25 2.57 2.4z" fill="#14a0d4"/></svg></div>
<div class="t" style="left:904px;top:634px;font-size:13px;line-height:15px;color:#1d2125;letter-spacing:0.451px;">unfiltered_html</div>
<div class="cb" style="left:882px;top:651px"><svg width="16" height="16" viewBox="0 0 16 16"><path transform="translate(-3.07,-2.25) scale(1.07)" d="M14.83 4.89l1.34.94-5.81 8.38H9.02L5.78 9.67l1.34-1.25 2.57 2.4z" fill="#14a0d4"/></svg></div>
<div class="t" style="left:904px;top:653px;font-size:13px;line-height:15px;color:#1d2125;letter-spacing:0.298px;">upload_files</div>
<div class="cb" style="left:882px;top:670px"><svg width="16" height="16" viewBox="0 0 16 16"><path transform="translate(-3.07,-2.25) scale(1.07)" d="M14.83 4.89l1.34.94-5.81 8.38H9.02L5.78 9.67l1.34-1.25 2.57 2.4z" fill="#14a0d4"/></svg></div>
<div class="t" style="left:904px;top:672px;font-size:13px;line-height:15px;color:#1d2125;letter-spacing:0.028px;">view_woocommerce_reports</div>
<div style="position:absolute;left:1131px;top:176px;width:15px;height:560px;background:#f0f0f0"></div>
<svg style="position:absolute;left:1135px;top:182px" width="7" height="4"><path d="M0 4 L3.5 0 L7 4 Z" fill="#a6aaa8"/></svg>
<div style="position:absolute;left:1133px;top:190px;width:11px;height:316px;background:#c1c2bf"></div>
<div style="position:absolute;left:1156px;top:186px;width:200px;height:233px;background:#f2f3f1;border:1px solid #e5e5e5;border-radius:3px;box-sizing:border-box"></div>
<div class="btnp" style="left:1162px;top:202px;width:188px;height:28px">Update</div>
<div style="position:absolute;left:1162px;top:240px;width:188px;height:1px;background:#dddddd"></div>
<div class="btn" style="left:1162px;top:248px;width:188px;height:28px">Add Role</div>
<div class="btn" style="left:1162px;top:279px;width:188px;height:28px">Rename Role</div>
<div class="btn" style="left:1162px;top:310px;width:188px;height:28px">Add Capability</div>
<div class="btn" style="left:1162px;top:341px;width:188px;height:28px">Delete Role</div>
<div class="btn" style="left:1162px;top:372px;width:188px;height:28px">Delete Capability</div>

</body></html>
